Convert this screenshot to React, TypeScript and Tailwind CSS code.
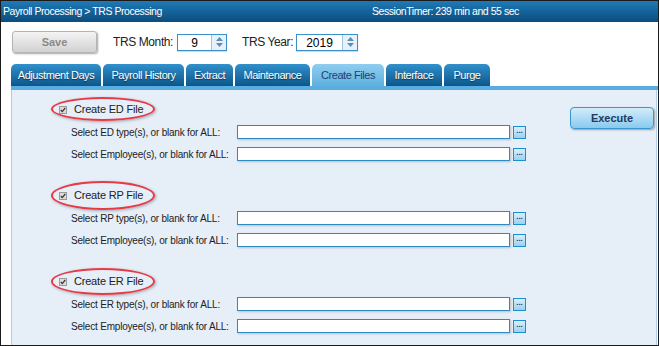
import React from 'react';

const tabs = ['Adjustment Days', 'Payroll History', 'Extract', 'Maintenance', 'Create Files', 'Interface', 'Purge'];
const tabWidths = ['w-[90px]', 'w-[81px]', 'w-[47px]', 'w-[75px]', 'w-[72px]', 'w-[56px]', 'w-[46px]'];

function Spinner({ value, width }: { value: string; width: string }) {
    return (
        <div className={`flex h-[17px] ${width} border border-[#3a8fc6] bg-white shadow-[0_1px_1px_rgba(0,0,0,0.15)]`}>
            <div className="flex-1 flex items-center justify-center text-[12px] text-black pt-[2px]">{value}</div>
            <div className="w-[15px] border-l border-[#9cc6e4] bg-[#e8f1f9] flex flex-col items-center justify-center gap-[2px]">
                <svg width="7" height="4" viewBox="0 0 7 4"><path d="M0 4 L3.5 0 L7 4 Z" fill="#5b8fb9" /></svg>
                <svg width="7" height="4" viewBox="0 0 7 4"><path d="M0 0 L3.5 4 L7 0 Z" fill="#5b8fb9" /></svg>
            </div>
        </div>
    );
}

function Check() {
    return (
        <div className="w-[8px] h-[8px] border border-[#9a9a9a] bg-[#dcdcdc] flex items-center justify-center">
            <svg width="6" height="6" viewBox="0 0 6 6">
                <path d="M0.8 3 L2.3 4.6 L5.2 1" stroke="#333" strokeWidth="1.2" fill="none" />
            </svg>
        </div>
    );
}

function FieldRow({ label }: { label: string }) {
    return (
        <div className="flex items-center h-[14px]">
            <div className="w-[166px] whitespace-nowrap text-[10px] text-[#222] tracking-[-0.2px]">{label}</div>
            <div className="w-[273px] h-[14px] border-[1.5px] border-[#2b8bc5] bg-white shadow-[1px_1px_2px_rgba(0,0,0,0.2)]" />
            <div className="ml-[3px] w-[13px] h-[13px] border-[1.5px] border-[#1b8fcf] bg-gradient-to-b from-[#d8eefb] to-[#9dd0f0] flex items-center justify-center">
                <span className="text-[8px] leading-none font-bold text-[#3a2a6a] -mt-[3px]">...</span>
            </div>
        </div>
    );
}

function Section({ code, ellipse }: { code: string; ellipse: string }) {
    return (
        <div className="flex flex-col">
            <div className="relative flex items-center h-[24px] pl-[47px] pt-[3px] gap-[7px]">
                <div className={`absolute left-[39px] ${ellipse} w-[104px] rounded-[50%] border-[2.5px] border-[#e63a46] shadow-[1px_1px_3px_rgba(0,0,0,0.3)]`} />
                <Check />
                <span className="text-[11px] text-[#222] tracking-[-0.2px]">Create {code} File</span>
            </div>
            <div className="flex flex-col gap-[8px] pl-[59px] mt-[5px]">
                <FieldRow label={`Select ${code} type(s), or blank for ALL:`} />
                <FieldRow label="Select Employee(s), or blank for ALL:" />
            </div>
        </div>
    );
}

export default function App() {
    return (
        <div className="w-[659px] h-[346px] border border-[#1a1a1a] bg-white overflow-hidden flex flex-col" style={{ fontFamily: '"Liberation Sans", Arial, sans-serif' }}>
            {/* header */}
            <div className="h-[21px] shrink-0 flex items-center bg-gradient-to-b from-[#1f7ab7] to-[#0b4d7e] text-white text-[10.5px] tracking-[-0.45px] whitespace-nowrap">
                <div className="w-[371px] pl-[2px]">Payroll Processing &gt; TRS Processing</div>
                <div>SessionTimer: 239 min and 55 sec</div>
            </div>

            {/* toolbar */}
            <div className="h-[42px] shrink-0 flex items-center pl-[11px] pb-[2px] whitespace-nowrap">
                <button className="w-[85px] h-[22px] rounded-[3px] border border-[#b4b4b4] bg-gradient-to-b from-[#f4f4f4] to-[#d2d2d2] shadow-[1px_1px_2px_rgba(0,0,0,0.35)] text-[11px] font-bold text-[#8a8a8a]">
                    Save
                </button>
                <span className="ml-[16px] w-[64px] text-[12px] tracking-[-0.4px] text-[#222]">TRS Month:</span>
                <Spinner value="9" width="w-[50px]" />
                <span className="ml-[15px] w-[54px] text-[12px] tracking-[-0.4px] text-[#222]">TRS Year:</span>
                <Spinner value="2019" width="w-[62px]" />
            </div>

            {/* tabs */}
            <div className="h-[22px] shrink-0 flex items-end pl-[10px] gap-[2px]">
                {tabs.map((t, i) => {
                    const active = t === 'Create Files';
                    return (
                        <div
                            key={t}
                            className={`${tabWidths[i]} h-[22px] rounded-t-[5px] flex items-center justify-center whitespace-nowrap text-[11px] tracking-[-0.45px] ${
                                active
                                    ? 'bg-gradient-to-b from-[#8fcdf0] to-[#5fb0df] text-[#1e3f70]'
                                    : 'bg-gradient-to-b from-[#3190cb] to-[#0a578c] text-white [text-shadow:0_1px_1px_rgba(0,0,0,0.5)]'
                            }`}
                        >
                            {t}
                        </div>
                    );
                })}
            </div>
            <div className="h-[4px] shrink-0 ml-[10px] bg-[#5aaedf]" />

            {/* content */}
            <div className="flex-1 ml-[10px] mr-[1px] bg-[#e6eef8] border-l border-r border-[#a9cdea] flex">
                <div className="flex-1 flex flex-col pt-[6px] gap-[21px]">
                    <Section code="ED" ellipse="top-[1px] h-[24px]" />
                    <Section code="RP" ellipse="-top-[1px] h-[29px]" />
                    <Section code="ER" ellipse="top-[0px] h-[27px]" />
                </div>
                <div className="pt-[15px] pr-[2px]">
                    <button className="w-[84px] h-[22px] rounded-[4px] border border-[#3a97cf] bg-gradient-to-b from-[#d4ecfa] to-[#88caee] shadow-[1px_1px_2px_rgba(0,0,0,0.35)] text-[11px] font-bold text-[#1c3a5e]">
                        Execute
                    </button>
                </div>
            </div>
        </div>
    );
}
